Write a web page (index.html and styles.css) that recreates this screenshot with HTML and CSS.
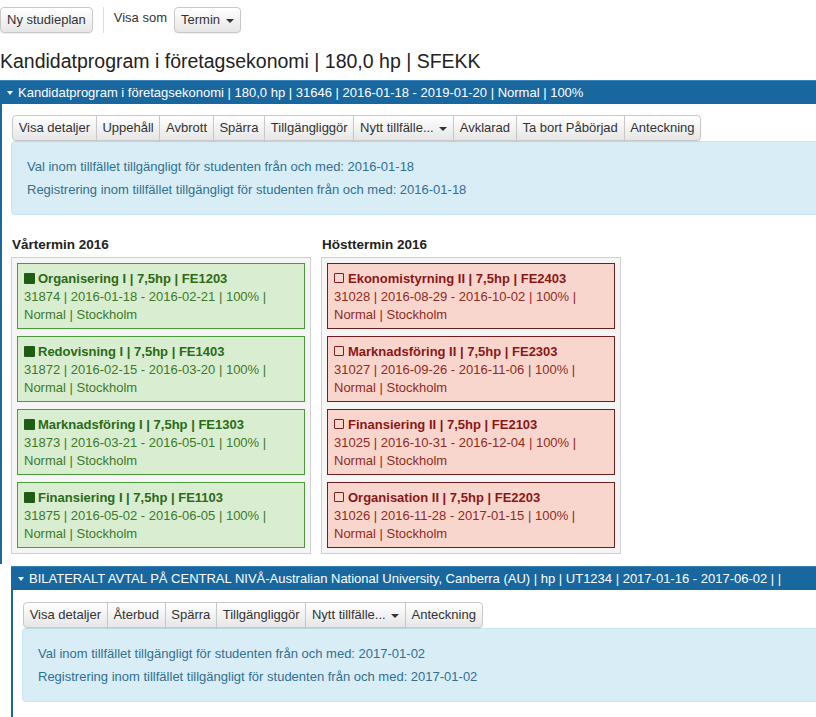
FILE: index.html
```html
<!DOCTYPE html>
<html lang="sv">
<head>
    <meta charset="UTF-8">
    <meta name="viewport" content="width=device-width, initial-scale=1.0">
    <title>Studieplan</title>
    <link rel="stylesheet" href="styles.css">
</head>
<body>
    <div class="toolbar">
        <button class="btn">Ny studieplan</button>
        <span class="divider"></span>
        <span class="toolbar-label">Visa som</span>
        <button class="btn">Termin <span class="caret"></span></button>
    </div>

    <h1 class="page-title">Kandidatprogram i företagsekonomi | 180,0 hp | SFEKK</h1>

    <div class="program">
        <div class="program-head"><span class="head-caret"></span>Kandidatprogram i företagsekonomi | 180,0 hp | 31646 | 2016-01-18 - 2019-01-20 | Normal | 100%</div>
        <div class="program-body">
            <div class="btn-group">
                <button class="btn">Visa detaljer</button>
                <button class="btn">Uppehåll</button>
                <button class="btn">Avbrott</button>
                <button class="btn">Spärra</button>
                <button class="btn">Tillgängliggör</button>
                <button class="btn">Nytt tillfälle... <span class="caret"></span></button>
                <button class="btn">Avklarad</button>
                <button class="btn">Ta bort Påbörjad</button>
                <button class="btn">Anteckning</button>
            </div>
            <div class="info">
                <p>Val inom tillfället tillgängligt för studenten från och med: 2016-01-18</p>
                <p>Registrering inom tillfället tillgängligt för studenten från och med: 2016-01-18</p>
            </div>

            <div class="terms">
                <div class="term">
                    <h3>Vårtermin 2016</h3>
                    <div class="term-box">
                        <div class="course done">
                            <div class="course-title"><span class="mark"></span>Organisering I | 7,5hp | FE1203</div>
                            <div>31874 | 2016-01-18 - 2016-02-21 | 100% |</div>
                            <div>Normal | Stockholm</div>
                        </div>
                        <div class="course done">
                            <div class="course-title"><span class="mark"></span>Redovisning I | 7,5hp | FE1403</div>
                            <div>31872 | 2016-02-15 - 2016-03-20 | 100% |</div>
                            <div>Normal | Stockholm</div>
                        </div>
                        <div class="course done">
                            <div class="course-title"><span class="mark"></span>Marknadsföring I | 7,5hp | FE1303</div>
                            <div>31873 | 2016-03-21 - 2016-05-01 | 100% |</div>
                            <div>Normal | Stockholm</div>
                        </div>
                        <div class="course done">
                            <div class="course-title"><span class="mark"></span>Finansiering I | 7,5hp | FE1103</div>
                            <div>31875 | 2016-05-02 - 2016-06-05 | 100% |</div>
                            <div>Normal | Stockholm</div>
                        </div>
                    </div>
                </div>
                <div class="term">
                    <h3>Hösttermin 2016</h3>
                    <div class="term-box">
                        <div class="course open">
                            <div class="course-title"><span class="mark"></span>Ekonomistyrning II | 7,5hp | FE2403</div>
                            <div>31028 | 2016-08-29 - 2016-10-02 | 100% |</div>
                            <div>Normal | Stockholm</div>
                        </div>
                        <div class="course open">
                            <div class="course-title"><span class="mark"></span>Marknadsföring II | 7,5hp | FE2303</div>
                            <div>31027 | 2016-09-26 - 2016-11-06 | 100% |</div>
                            <div>Normal | Stockholm</div>
                        </div>
                        <div class="course open">
                            <div class="course-title"><span class="mark"></span>Finansiering II | 7,5hp | FE2103</div>
                            <div>31025 | 2016-10-31 - 2016-12-04 | 100% |</div>
                            <div>Normal | Stockholm</div>
                        </div>
                        <div class="course open">
                            <div class="course-title"><span class="mark"></span>Organisation II | 7,5hp | FE2203</div>
                            <div>31026 | 2016-11-28 - 2017-01-15 | 100% |</div>
                            <div>Normal | Stockholm</div>
                        </div>
                    </div>
                </div>
            </div>
        </div>
    </div>

    <div class="program exchange">
        <div class="program-head"><span class="head-caret"></span>BILATERALT AVTAL PÅ CENTRAL NIVÅ-Australian National University, Canberra (AU) | hp | UT1234 | 2017-01-16 - 2017-06-02 | |</div>
        <div class="program-body">
            <div class="btn-group">
                <button class="btn">Visa detaljer</button>
                <button class="btn">Återbud</button>
                <button class="btn">Spärra</button>
                <button class="btn">Tillgängliggör</button>
                <button class="btn">Nytt tillfälle... <span class="caret"></span></button>
                <button class="btn">Anteckning</button>
            </div>
            <div class="info">
                <p>Val inom tillfället tillgängligt för studenten från och med: 2017-01-02</p>
                <p>Registrering inom tillfället tillgängligt för studenten från och med: 2017-01-02</p>
            </div>
        </div>
    </div>
</body>
</html>
```

FILE: styles.css
```css
* {
    box-sizing: border-box;
}
html {
    overflow-x: hidden;
}
body {
    margin: 0;
    font-family: "Liberation Sans", Arial, sans-serif;
    font-size: 13px;
    color: #333;
    background: #fff;
}

/* buttons */
.btn {
    font-family: inherit;
    font-size: 13px;
    line-height: 16px;
    color: #333;
    padding: 4px 6px;
    border: 1px solid #c8c8c8;
    border-radius: 4px;
    background: linear-gradient(#fff, #e6e6e6);
    box-shadow: 0 1px 1px rgba(0,0,0,0.06);
    cursor: pointer;
    white-space: nowrap;
}
.caret {
    display: inline-block;
    width: 0;
    height: 0;
    margin-left: 2px;
    vertical-align: middle;
    border-top: 4px solid #333;
    border-left: 4px solid transparent;
    border-right: 4px solid transparent;
}
.btn-group {
    display: inline-flex;
    margin-left: 1px;
}
.btn-group .btn {
    border-radius: 0;
    margin-left: -1px;
    padding: 4px 5.7px;
}
.btn-group .btn:first-child {
    margin-left: 0;
    border-radius: 4px 0 0 4px;
}
.btn-group .btn:last-child {
    border-radius: 0 4px 4px 0;
}

/* top toolbar */
.toolbar {
    display: flex;
    align-items: center;
    padding-top: 7px;
}
.divider {
    width: 1px;
    height: 26px;
    background: #ddd;
    margin: 0 10px;
}
.toolbar-label {
    margin-right: 7px;
    margin-top: -5px;
}

.page-title {
    font-size: 19.5px;
    font-weight: normal;
    line-height: 22px;
    margin: 17px 0 8px;
    color: #222;
}

/* program panels */
.program {
    border-left: 2px solid #1b68a1;
    margin-right: -20px;
}
.program-head {
    background: #19679f;
    border-top: 1px solid #3a83b9;
    color: #fff;
    height: 24px;
    line-height: 23px;
    padding-left: 7px;
    white-space: nowrap;
    margin-left: -2px;
}
.head-caret {
    display: inline-block;
    width: 0;
    height: 0;
    margin-right: 5px;
    vertical-align: 2px;
    border-top: 4px solid #fff;
    border-left: 3.5px solid transparent;
    border-right: 3.5px solid transparent;
}
.program-body {
    padding: 11px 0 10px 9px;
}
.exchange {
    margin-left: 11px;
    margin-top: 2px;
}
.exchange .program-body {
    padding-top: 12px;
    padding-bottom: 20px;
}

.info {
    background: #d9edf7;
    border: 1px solid #c6e6f2;
    border-radius: 4px;
    color: #31708f;
    padding: 13px 15px;
}
.info p {
    margin: 0;
    line-height: 23px;
}

/* terms */
.terms {
    display: flex;
    gap: 10px;
    margin-top: 21px;
}
.term {
    width: 300px;
}
.term h3 {
    font-size: 13.5px;
    line-height: 17px;
    margin: 0 0 4px 1px;
    color: #222;
}
.term-box {
    background: #f5f5f5;
    border: 1px solid #d0d0d0;
    padding: 5px 5px 5px;
}
.course {
    border: 1px solid;
    padding: 5px 6px 4px;
    line-height: 18px;
    margin-bottom: 7px;
}
.course:last-child {
    margin-bottom: 0;
}
.course-title {
    font-weight: bold;
    line-height: 19px;
}
.mark {
    display: inline-block;
    width: 11px;
    height: 11px;
    margin-right: 3px;
    vertical-align: -1px;
    border-radius: 1px;
}
.done {
    background: #d9edd0;
    border-color: #4a9a3a;
    color: #3c7a2a;
}
.done .course-title {
    color: #2b6a17;
}
.done .mark {
    background: #1f5c14;
}
.open {
    background: #f8d6cd;
    border-color: #6e1c1c;
    color: #8e2b22;
}
.open .course-title {
    color: #8a1717;
}
.open .mark {
    width: 10px;
    height: 10px;
    border: 1px solid #7a1f1f;
    margin-right: 4px;
    vertical-align: 0;
}
```
